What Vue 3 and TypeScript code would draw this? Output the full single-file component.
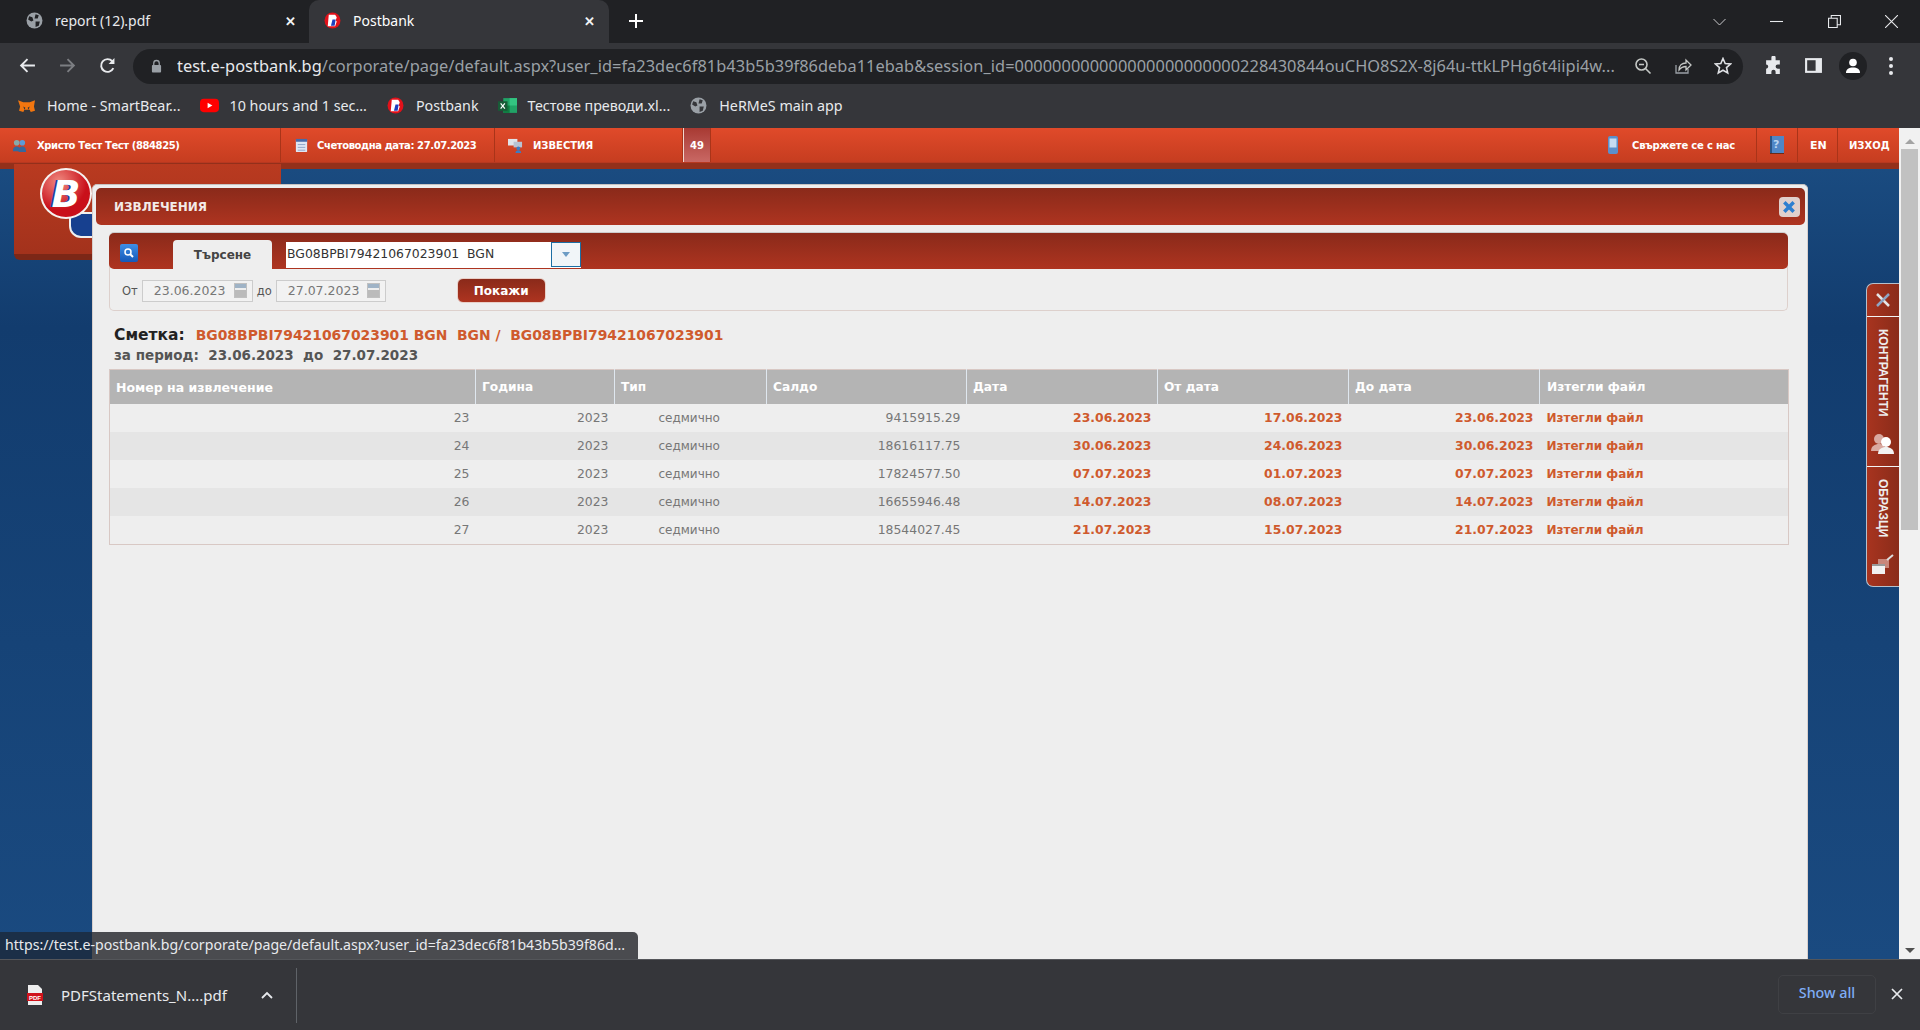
<script setup lang="ts">
const bookmarks = [
  { label: 'Home - SmartBear...', icon: 'fox' },
  { label: '10 hours and 1 sec...', icon: 'yt' },
  { label: 'Postbank', icon: 'pb' },
  { label: 'Тестове преводи.xl...', icon: 'xl' },
  { label: 'HeRMeS main app', icon: 'globe' },
]

const rows = [
  { no: 23, saldo: '9415915.29', date: '23.06.2023', from: '17.06.2023', to: '23.06.2023' },
  { no: 24, saldo: '18616117.75', date: '30.06.2023', from: '24.06.2023', to: '30.06.2023' },
  { no: 25, saldo: '17824577.50', date: '07.07.2023', from: '01.07.2023', to: '07.07.2023' },
  { no: 26, saldo: '16655946.48', date: '14.07.2023', from: '08.07.2023', to: '14.07.2023' },
  { no: 27, saldo: '18544027.45', date: '21.07.2023', from: '15.07.2023', to: '21.07.2023' },
]

const columns = ['Номер на извлечение', 'Година', 'Тип', 'Салдо', 'Дата', 'От дата', 'До дата', 'Изтегли файл']
</script>

<template>
  <div class="window">
    <div class="tabstrip">
      <div class="tab">
        <svg class="fav" viewBox="0 0 16 16"><circle cx="8" cy="8" r="7.5" fill="#9aa0a6" /><path d="M3 4l3 1 1 3-2 1-3-2zM9 2l3 1-1 3-3 0zM9 9l4 0-1 4-3 1z" fill="#202124" /></svg>
        <span class="tab-title">report (12).pdf</span>
        <span class="tab-x">✕</span>
      </div>
      <div class="tab active">
        <svg class="fav" viewBox="0 0 16 16"><circle cx="8" cy="8" r="7.5" fill="#e2111a" /><path d="M4.500 2.500h6l1.500 2.500-1 3 1 1-1.500 4.500H3.500z" fill="#fff" /><path d="M8 7h3l-1 6H6.500z" fill="#1d3fbf" /></svg>
        <span class="tab-title">Postbank</span>
        <span class="tab-x">✕</span>
      </div>
      <svg class="newtab" viewBox="0 0 16 16"><path d="M8 1v14M1 8h14" stroke="#fff" stroke-width="2" /></svg>
      <div class="win-controls">
        <svg viewBox="0 0 12 8" class="wc-chev"><path d="M0 1l6 6 6-6" fill="none" stroke="#c8c9cb" /></svg>
        <svg viewBox="0 0 12 12" class="wc"><path d="M0 6h12" stroke="#e8eaed" /></svg>
        <svg viewBox="0 0 12 12" class="wc"><path d="M.5 3h8v8.500h-8zM3 3V.5h8.500V9H9" fill="none" stroke="#e8eaed" /></svg>
        <svg viewBox="0 0 12 12" class="wc"><path d="M0 0l12 12M12 0L0 12" stroke="#e8eaed" /></svg>
      </div>
    </div>

    <div class="toolbar">
      <svg class="nav" viewBox="0 0 16 16"><path d="M15 8H2M8 2L2 8l6 6" fill="none" stroke="#e8eaed" stroke-width="1.800" /></svg>
      <svg class="nav" viewBox="0 0 16 16"><path d="M1 8h13M8 2l6 6-6 6" fill="none" stroke="#7c7e82" stroke-width="1.800" /></svg>
      <svg class="nav" viewBox="0 0 16 16"><path d="M13.500 10.500A6 6 0 1 1 12.500 4" fill="none" stroke="#e8eaed" stroke-width="1.800" /><path d="M14.500 1v5.500H9z" fill="#e8eaed" /></svg>
      <div class="omnibox">
        <svg class="lock" viewBox="0 0 12 14"><path d="M3 6V4a3 3 0 0 1 6 0v2" fill="none" stroke="#9aa0a6" stroke-width="1.400" /><rect x="1" y="6" width="10" height="8" rx="1" fill="#9aa0a6" /></svg>
        <span class="url"><b>test.e-postbank.bg</b>/corporate/page/default.aspx?user_id=fa23dec6f81b43b5b39f86deba11ebab&amp;session_id=000000000000000000000000228430844ouCHO8S2X-8j64u-ttkLPHg6t4iipi4w...</span>
        <svg class="omni-ic zoom-ic" viewBox="0 0 18 18"><circle cx="7.500" cy="7.500" r="5.500" fill="none" stroke="#c4c7c5" stroke-width="1.600" /><path d="M5 7.500h5M11.500 11.500l5 5" stroke="#c4c7c5" stroke-width="1.600" /></svg>
        <svg class="omni-ic" viewBox="0 0 18 18"><path d="M2 8v8h12v-4" fill="none" stroke="#9aa0a6" stroke-width="1.300" /><path d="M5 13c0-5 3-7 7-7V3l5 5-5 5V9.500c-3 0-5 1-7 3.500z" fill="none" stroke="#c4c7c5" stroke-width="1.300" /></svg>
        <svg class="omni-ic" viewBox="0 0 18 18"><path d="M9 1.500l2.200 5 5.300.5-4 3.600 1.200 5.300L9 13.200l-4.700 2.700 1.200-5.300-4-3.600 5.300-.5z" fill="none" stroke="#dfe1e5" stroke-width="1.600" /></svg>
      </div>
      <svg class="tool-ic" viewBox="0 0 18 18"><path d="M7 1.500a2 2 0 0 1 4 0V4h4v4h-2a2 2 0 0 0 0 4h2v5H11v-2a2 2 0 0 0-4 0v2H2v-5a2 2 0 0 0 0-4V4h5z" fill="#e8eaed" /></svg>
      <svg class="tool-ic" viewBox="0 0 18 18"><rect x="1" y="2" width="16" height="14" fill="#e8eaed" /><rect x="3" y="4" width="8" height="10" fill="#35363a" /></svg>
      <div class="avatar"><svg viewBox="0 0 18 18"><circle cx="9" cy="5.500" r="3.800" fill="#fff" /><path d="M2 16c0-4 3-5.500 7-5.500s7 1.500 7 5.500z" fill="#fff" /></svg></div>
      <div class="dots"><i></i><i></i><i></i></div>
    </div>

    <div class="bookmarks">
      <div v-for="b in bookmarks" :key="b.label" class="bookmark">
        <svg v-if="b.icon === 'fox'" viewBox="0 0 16 16"><path d="M0 3l5 2h6l5-2-1 6 1 4-4 1-1-2H6l-1 2-4-1 1-4z" fill="#f2760f" /><path d="M5 9l2 1-1 2zM11 9l-2 1 1 2z" fill="#35363a" /></svg>
        <svg v-else-if="b.icon === 'yt'" viewBox="0 0 20 16"><rect y="1" width="20" height="14" rx="4" fill="#f00" /><path d="M8 5l5 3-5 3z" fill="#fff" /></svg>
        <svg v-else-if="b.icon === 'pb'" viewBox="0 0 16 16"><circle cx="8" cy="8" r="7.500" fill="#e2111a" /><path d="M4.500 2.500h6l1.500 2.500-1 3 1 1-1.500 4.500H3.500z" fill="#fff" /><path d="M8 7h3l-1 6H6.500z" fill="#1d3fbf" /></svg>
        <svg v-else-if="b.icon === 'xl'" viewBox="0 0 18 16"><rect x="5" y="1" width="13" height="14" fill="#21a366" /><rect x="11" y="1" width="7" height="7" fill="#33c481" /><rect x="5" y="8" width="6" height="7" fill="#107c41" /><rect y="4" width="9" height="9" fill="#185c37" /><path d="M2.500 6l4 5M6.500 6l-4 5" stroke="#fff" stroke-width="1.100" /></svg>
        <svg v-else viewBox="0 0 16 16"><circle cx="8" cy="8" r="7.500" fill="#9aa0a6" /><path d="M3 4l3 1 1 3-2 1-3-2zM9 2l3 1-1 3-3 0zM9 9l4 0-1 4-3 1z" fill="#35363a" /></svg>
        <span>{{ b.label }}</span>
      </div>
    </div>

    <div class="page">
      <div class="site">
        <header class="topbar">
          <div class="top-cell user">
            <svg class="top-ic" viewBox="0 0 16 16"><circle cx="5" cy="5" r="3" fill="#8aa" /><circle cx="11" cy="5" r="3" fill="#5b9bd8" /><path d="M1 14c0-4 2-5 4-5s4 1 4 5zM7 15c0-5 2-6 4-6s4 1 4 6z" fill="#35689c" /></svg>
            Христо Тест Тест (884825)
          </div>
          <div class="top-cell date">
            <svg class="top-ic" viewBox="0 0 14 16"><rect x="1" y="1" width="12" height="14" rx="1" fill="#dfe6f3" /><rect x="1" y="1" width="12" height="3" fill="#4a6aa8" /><path d="M3 7h8M3 10h8M3 13h8" stroke="#8fa4c8" /></svg>
            Счетоводна дата: 27.07.2023
          </div>
          <div class="top-cell news">
            <svg class="top-ic" viewBox="0 0 16 16"><rect x="0" y="1" width="10" height="7" fill="#dfe3ea" /><rect x="6" y="4" width="9" height="6" fill="#b7c3d4" /><circle cx="11" cy="11" r="2" fill="#3b7cc4" /><path d="M8 16c0-2 1-3 3-3s3 1 3 3z" fill="#3b7cc4" /></svg>
            ИЗВЕСТИЯ
          </div>
          <div class="top-count">49</div>
          <div class="top-fill"></div>
          <div class="top-cell contact">
            <svg class="top-ic phone" viewBox="0 0 12 18"><rect x="1" y="0" width="10" height="18" rx="2" fill="#5b8fcb" /><rect x="2.500" y="2.500" width="7" height="9" fill="#c6dbf2" /></svg>
            Свържете се с нас
          </div>
          <div class="top-cell help">
            <svg class="book" viewBox="0 0 14 18"><rect x="0" y="0" width="14" height="17" fill="#4f86c6" /><rect x="0" y="0" width="2" height="17" fill="#2a5588" /><rect y="17" width="14" height="1" fill="#6b2a16" /></svg>
            <span class="q">?</span>
          </div>
          <div class="top-cell lang">EN</div>
          <div class="top-cell exit">ИЗХОД</div>
        </header>
        <div class="top-shade"></div>
        <div class="blue"></div>
      </div>

      <div class="logo-tab"></div>
      <div class="logo">
        <div class="logo-blue"></div>
        <div class="logo-round"><span class="logo-b">B</span></div>
      </div>

      <section class="modal">
        <div class="modal-head">
          <span>ИЗВЛЕЧЕНИЯ</span>
          <button class="modal-close"><svg viewBox="0 0 12 12"><path d="M2 2l8 8M10 2l-8 8" stroke="#2d7fd0" stroke-width="3" /></svg></button>
        </div>

        <div class="filters">
          <div class="filters-bar">
            <div class="search-ic"><svg viewBox="0 0 12 12"><circle cx="5" cy="5" r="3" fill="none" stroke="#fff" stroke-width="1.500" /><path d="M7 7l3 3" stroke="#fff" stroke-width="2" /></svg></div>
            <div class="search-tab">Търсене</div>
            <div class="account-select">
              <span>BG08BPBI79421067023901&nbsp; BGN</span>
              <i class="select-btn"><b></b></i>
            </div>
          </div>
          <div class="filters-row">
            <span class="lbl">От</span>
            <div class="date-input"><span>23.06.2023</span><i class="cal"></i></div>
            <span class="lbl">до</span>
            <div class="date-input"><span>27.07.2023</span><i class="cal"></i></div>
            <button class="show-btn">Покажи</button>
          </div>
        </div>

        <div class="account-line">
          <strong>Сметка:</strong>
          <span>BG08BPBI79421067023901 BGN&nbsp; BGN /&nbsp; BG08BPBI79421067023901</span>
        </div>
        <div class="period-line">за период:&nbsp; <b>23.06.2023&nbsp; до&nbsp; 27.07.2023</b></div>

        <table class="statements">
          <colgroup>
            <col class="c1" /><col class="c2" /><col class="c3" /><col class="c4" />
            <col class="c5" /><col class="c5" /><col class="c5" /><col />
          </colgroup>
          <thead>
            <tr><th v-for="c in columns" :key="c">{{ c }}</th></tr>
          </thead>
          <tbody>
            <tr v-for="r in rows" :key="r.no">
              <td class="num">{{ r.no }}</td>
              <td class="num">2023</td>
              <td class="type">седмично</td>
              <td class="num">{{ r.saldo }}</td>
              <td class="num link">{{ r.date }}</td>
              <td class="num link">{{ r.from }}</td>
              <td class="num link">{{ r.to }}</td>
              <td class="link file-link">Изтегли файл</td>
            </tr>
          </tbody>
        </table>
      </section>

      <aside class="side-tabs">
        <div class="side-tool">
          <svg viewBox="0 0 16 16"><path d="M2 2l12 12" stroke="#e6e6e6" stroke-width="2.500" /><path d="M14 2L2 14" stroke="#8fa6c4" stroke-width="2.500" /></svg>
        </div>
        <div class="side-item first">
          <span class="side-label">КОНТРАГЕНТИ</span>
          <svg viewBox="0 0 24 22"><circle cx="8" cy="6" r="5" fill="#d9a9a0" /><path d="M0 18c0-5 4-7 8-7s6 2 6 7z" fill="#d9a9a0" /><circle cx="15" cy="9" r="5" fill="#fff" /><path d="M7 21c0-5 4-7 8-7s8 2 8 7z" fill="#f2f2f2" /></svg>
        </div>
        <div class="side-item">
          <span class="side-label">ОБРАЗЦИ</span>
          <svg viewBox="0 0 24 22"><rect x="7" y="6" width="11" height="9" fill="#c9867a" /><path d="M16 7l6-5" stroke="#ddd" stroke-width="2" /><rect x="1" y="11" width="13" height="10" fill="#f1f1f1" /><rect x="1" y="11" width="13" height="2" fill="#999" /></svg>
        </div>
      </aside>

      <div class="scrollbar">
        <i class="arrow up"></i>
        <div class="thumb"></div>
        <i class="arrow down"></i>
      </div>

      <div class="status-bubble">https://test.e-postbank.bg/corporate/page/default.aspx?user_id=fa23dec6f81b43b5b39f86d...</div>
    </div>

    <footer class="shelf">
      <svg class="pdf" viewBox="0 0 16 20"><path d="M1 0h10l4 4v16H1z" fill="#eee" /><rect y="8" width="16" height="8" fill="#d0121b" /><text x="8" y="14.500" text-anchor="middle" class="pdf-text">PDF</text></svg>
      <span class="file">PDFStatements_N....pdf</span>
      <svg class="chev" viewBox="0 0 12 8"><path d="M1 7l5-5 5 5" fill="none" stroke="#e8eaed" stroke-width="1.800" /></svg>
      <div class="shelf-sep"></div>
      <button class="show-all">Show all</button>
      <svg class="shelf-x" viewBox="0 0 12 12"><path d="M1 1l10 10M11 1L1 11" stroke="#e8eaed" stroke-width="1.700" /></svg>
    </footer>
  </div>
</template>

<style>
html, body { margin: 0; overflow: hidden; }
</style>

<style scoped>
.window {
  width: 1920px;
  height: 1030px;
  display: flex;
  flex-direction: column;
  overflow: hidden;
  font-family: "Noto Sans", sans-serif;
}

.tabstrip {
  height: 43px;
  background: #202124;
  display: flex;
  align-items: flex-end;
  flex: none;
}
.tab {
  width: 300px;
  height: 43px;
  display: flex;
  align-items: center;
  padding: 0 4px 2px 26px;
  box-sizing: border-box;
  color: #e8eaed;
  font-size: 14px;
  flex: none;
}
.tab.active {
  width: 300px;
  margin-left: 9px;
  padding-left: 15px;
  padding-right: 14px;
  background: #35363a;
  border-radius: 10px 10px 0 0;
  color: #fff;
}
.fav { width: 17px; height: 17px; flex: none; margin-right: 12px; }
.tab-title { flex: 1; }
.tab-x { font-size: 13px; color: #f1f3f4; font-weight: 700; }
.newtab { width: 16px; height: 16px; margin: 0 0 1px 19px; align-self: center; }
.win-controls {
  margin-left: auto;
  display: flex;
  align-items: center;
  align-self: stretch;
  padding-right: 22px;
  gap: 44.500px;
}
.wc { width: 13px; height: 13px; }
.wc-chev { width: 13px; height: 8px; }

.toolbar {
  height: 45px;
  background: #35363a;
  display: flex;
  align-items: center;
  flex: none;
  padding-left: 19px;
  box-sizing: border-box;
}
.nav { width: 17px; height: 17px; margin-right: 23px; flex: none; }
.omnibox {
  width: 1610px;
  height: 35px;
  margin-left: -6px;
  background: #202124;
  border-radius: 18px;
  display: flex;
  align-items: center;
  padding: 0 11px 0 18px;
  box-sizing: border-box;
  flex: none;
  margin-top: 1px;
}
.lock { width: 11px; height: 14px; margin-right: 15px; flex: none; }
.url {
  flex: 1;
  white-space: nowrap;
  overflow: hidden;
  color: #9aa0a6;
  font-size: 16.350px;
  letter-spacing: .05px;
}
.url b { color: #e8eaed; font-weight: 400; }
.omni-ic { width: 18px; height: 18px; margin-left: 22px; flex: none; }
.omni-ic.zoom-ic { margin-left: 12px; }
.tool-ic { width: 19px; height: 19px; margin-left: 21px; flex: none; }
.avatar {
  width: 28px;
  height: 28px;
  border-radius: 50%;
  background: #202124;
  margin-left: 16px;
  display: flex;
  align-items: center;
  justify-content: center;
}
.avatar svg { width: 18px; height: 18px; }
.dots { display: flex; flex-direction: column; gap: 3px; margin-left: 22px; }
.dots i { width: 4px; height: 4px; border-radius: 50%; background: #e8eaed; }

.bookmarks {
  height: 40px;
  background: #35363a;
  display: flex;
  align-items: center;
  padding-left: 17px;
  gap: 19px;
  flex: none;
  box-sizing: border-box;
  padding-bottom: 6px;
}
.bookmark {
  display: flex;
  align-items: center;
  gap: 11px;
  color: #e8eaed;
  font-size: 14.300px;
}
.bookmark svg { width: 19px; height: 17px; }

.page {
  flex: 1;
  position: relative;
  overflow: hidden;
  min-height: 0;
  background: #f1f1f1;
}
.site {
  width: 1899px;
  height: 100%;
  display: flex;
  flex-direction: column;
  font-family: "DejaVu Sans", sans-serif;
}
.topbar {
  height: 35px;
  display: flex;
  flex: none;
  background: linear-gradient(#e04a2a, #c63d20);
  border-bottom: 1px solid #b83820;
  box-sizing: border-box;
  color: #fff;
  font-size: 10px;
  font-weight: 700;
  letter-spacing: -.4px;
}
.top-cell {
  display: flex;
  align-items: center;
  border-right: 1px solid #a93419;
  box-sizing: border-box;
  flex: none;
  padding-left: 12px;
  white-space: nowrap;
}
.top-ic { width: 15px; height: 15px; margin-right: 10px; flex: none; }
.user { width: 281px; }
.date { width: 214px; padding-left: 13px; }
.date .top-ic { margin-right: 8px; }
.news { width: 188px; padding-left: 13px; letter-spacing: 0; }
.top-count {
  width: 28px;
  background: linear-gradient(#a83a33, #c96864);
  border-left: 1px solid #f3d7d0;
  border-right: 1px solid #a93419;
  box-sizing: border-box;
  display: flex;
  align-items: center;
  justify-content: center;
  letter-spacing: 0;
}
.top-fill { flex: 1; }
.contact { border-right: 1px solid #a93419; width: 150px; padding-left: 0; letter-spacing: -.2px; }
.phone { height: 18px; margin-right: 13px; width: 12px; }
.help { width: 41px; padding-left: 13px; position: relative; }
.book { width: 14px; height: 18px; }
.q { position: absolute; left: 16px; top: 10px; color: #b8d4f0; font-size: 11px; }
.lang { width: 40px; padding-left: 12px; font-size: 11px; letter-spacing: 0; }
.exit { width: 61px; border-right: 0; padding-left: 11px; font-size: 10px; letter-spacing: 0; }
.top-shade { height: 6px; background: #93301b; flex: none; }
.blue {
  flex: 1;
  background: linear-gradient(#1a4b80, #123c6e 20%, #1a4a80);
}

.logo-tab {
  position: absolute;
  left: 14px;
  top: 36px;
  width: 267px;
  height: 96px;
  background: linear-gradient(#b93a20, #a3321c 94%, #7c2717 94%);
  border-radius: 0 0 6px 6px;
}
.logo { position: absolute; left: 40px; top: 40px; width: 56px; height: 72px; }
.logo-round {
  position: absolute;
  inset: 0 0 17px 0;
  width: 52px;
  height: 51px;
  border-radius: 50%;
  background: radial-gradient(circle at 35% 25%, #f08a80, #c9101a 60%);
  border: 2px solid #f6f2f0;
  box-sizing: border-box;
  display: flex;
  align-items: center;
  justify-content: center;
}
.logo-b {
  font: italic 700 38px "DejaVu Sans", sans-serif;
  color: #fff;
  text-shadow: -2px 0 0 #1d3f93;
}
.logo-blue {
  position: absolute;
  left: 29px;
  top: 44px;
  width: 26px;
  height: 22px;
  background: #17408f;
  border: 2px solid #f0f0f0;
  border-radius: 0 0 0 12px;
}

.modal {
  position: absolute;
  left: 92px;
  top: 56px;
  width: 1716px;
  height: 900px;
  background: #eeeeee;
  border-radius: 5px 5px 0 0;
  border-top: 1px solid #c7c2c0;
  border-right: 1px solid #d8cfcc;
  border-left: 1px solid #d8cfcc;
  padding: 3px 2px 0 3px;
  box-sizing: border-box;
  font-family: "DejaVu Sans", sans-serif;
}
.modal-head {
  height: 37px;
  background: linear-gradient(#8a2a1a, #ae3420);
  border-radius: 5px;
  display: flex;
  align-items: center;
  justify-content: space-between;
  padding: 0 5px 0 18px;
  color: #f3ebe8;
  font-size: 12px;
  font-weight: 700;
}
.modal-close {
  width: 21px;
  height: 20px;
  padding: 3px;
  border: 0;
  border-radius: 4px;
  background: #e0d0cc;
  display: flex;
}
.filters {
  margin: 7px 17px 0 13px;
  height: 79px;
  border: 1px solid #ddd0cc;
  border-top-color: #cccccc;
  border-radius: 5px;
  box-sizing: border-box;
}
.filters-bar {
  height: 36px;
  margin: 0 -1px;
  background: linear-gradient(#8a2a1a, #ae3420);
  border-radius: 5px;
  display: flex;
  position: relative;
}
.search-ic {
  width: 18px;
  height: 18px;
  margin: 11px 0 0 11px;
  background: linear-gradient(#3f8fe6, #1558b8);
  border-radius: 2px;
  display: flex;
  padding: 3px;
  box-sizing: border-box;
}
.search-tab {
  width: 99px;
  height: 29px;
  margin: 7px 0 0 35px;
  background: #eeeeee;
  border-radius: 4px 4px 0 0;
  text-align: center;
  line-height: 30px;
  font-size: 12px;
  font-weight: 700;
  color: #444;
}
.account-select {
  display: flex;
  margin: 9px 0 0 14px;
  width: 295px;
  height: 26px;
  align-self: flex-start;
  background: #fff;
  font-size: 12.400px;
  line-height: 24px;
  color: #333;
  padding-left: 1px;
  box-sizing: border-box;
}
.account-select span { flex: 1; white-space: nowrap; font-family: "DejaVu Sans", sans-serif; }
.select-btn {
  width: 30px;
  height: 25px;
  background: #f1f5f8;
  border: 1px solid #1c6ea4;
  box-sizing: border-box;
  display: flex;
  align-items: center;
  justify-content: center;
}
.select-btn b {
  border-left: 4px solid transparent;
  border-right: 4px solid transparent;
  border-top: 5px solid #6d9cc4;
}
.filters-row {
  display: flex;
  align-items: center;
  height: 41px;
  padding: 2px 0 0 12px;
  box-sizing: border-box;
  font-size: 11.500px;
  color: #555;
}
.lbl { margin-right: 4px; }
.date-input + .lbl { margin-left: 4px; }
.date-input {
  width: 111px;
  height: 22px;
  border: 1px solid #ccc;
  background: #f2f2f2;
  display: flex;
  align-items: center;
  justify-content: space-between;
  padding: 0 5px 0 11px;
  box-sizing: border-box;
  color: #777;
  font-size: 12.500px;
}
.cal {
  width: 13px;
  height: 15px;
  background: linear-gradient(#9fb3c6 0 30%, #eee 30% 45%, #bbb 45%);
  border: 1px solid #c0c0c0;
  box-sizing: border-box;
}
.date-input + .lbl + .date-input { width: 110px; }
.show-btn {
  margin-left: 71px;
  width: 89px;
  height: 25px;
  border: 1px solid #e8cfc8;
  border-radius: 6px;
  background: linear-gradient(#8a2a1a, #ae3420);
  color: #fff;
  font: 700 12px "DejaVu Sans", sans-serif;
}
.account-line {
  margin: 14px 0 0 18px;
  font-size: 14px;
  line-height: 20px;
  font-weight: 700;
  color: #333;
  white-space: nowrap;
}
.account-line strong { color: #222; margin-right: 11px; font-size: 15.500px; }
.account-line span { color: #cf5a2d; font-size: 13.900px; }
.period-line {
  margin-left: 18px;
  font-size: 13.500px;
  line-height: 20px;
  color: #555;
  font-weight: 700;
}
.statements {
  margin: 4px 0 0 13px;
  width: 1680px;
  border-collapse: collapse;
  table-layout: fixed;
  border: 1px solid #d8c8c4;
  font-size: 12px;
}
.c1 { width: 366px; }
.c2 { width: 139px; }
.c3 { width: 152px; }
.c4 { width: 200px; }
.c5 { width: 191px; }
.statements th {
  height: 34px;
  padding: 1px 0 0 6px;
  box-sizing: border-box;
  background: #b4b4b4;
  border-left: 1px solid #dfe7ef;
  color: #fff;
  text-align: left;
  font-weight: 700;
  font-size: 12.200px;
}
.statements th:first-child { border-left: 0; font-size: 12.500px; }
.statements th:last-child { padding-left: 7px; }
.statements td {
  height: 28.200px;
  padding: 0 6px;
  color: #777;
  white-space: nowrap;
  line-height: 28px;
  vertical-align: baseline;
}
.statements tbody tr:nth-child(even) td { background: #e5e5e5; }
.statements .num { text-align: right; font-size: 12.400px; }
.statements .type { padding-left: 44px; }
.statements .link { color: #cf5a2d; font-weight: 700; }
.statements .file-link { padding-left: 7px; }

.side-tabs {
  position: absolute;
  left: 1866px;
  top: 155px;
  width: 33px;
  height: 304px;
  background: linear-gradient(90deg, #a8341f, #8a2c1a);
  border-radius: 7px 0 0 7px;
  border: 1px solid #b5c0cc;
  border-right: 0;
  box-sizing: border-box;
  color: #eee;
  font: 700 11px "Liberation Sans", sans-serif;
}
.side-tool {
  height: 33px;
  display: flex;
  align-items: center;
  justify-content: center;
  border-bottom: 1px solid #f4f4f4;
  box-sizing: border-box;
}
.side-tool svg { width: 16px; height: 16px; }
.side-item {
  height: 150px;
  display: flex;
  flex-direction: column;
  align-items: center;
  padding-top: 12px;
  box-sizing: border-box;
}
.side-item.first { border-bottom: 1px solid #f4f4f4; }
.side-item svg { width: 24px; height: 22px; }
.side-label {
  writing-mode: vertical-rl;
  font-size: 12px;
  margin-bottom: 10px;
  height: 94px;
}
.side-item:last-child .side-label { height: 64px; }

.scrollbar {
  position: absolute;
  right: 0;
  top: 0;
  bottom: 0;
  width: 21px;
  background: #f1f1f1;
  display: flex;
  flex-direction: column;
  align-items: center;
}
.thumb {
  width: 17px;
  height: 381px;
  background: #c1c1c1;
  margin-top: 5px;
}
.arrow {
  border-left: 5px solid transparent;
  border-right: 5px solid transparent;
}
.arrow.up { border-bottom: 5px solid #a3a3a3; margin-top: 11px; height: 0; }
.arrow.down { border-top: 5px solid #505050; position: absolute; bottom: 6px; }

.status-bubble {
  position: absolute;
  left: 0;
  bottom: 0;
  height: 27px;
  width: 638px;
  background: linear-gradient(90deg, #1b2f47 0 92px, #4a4b4f 92px);
  border-radius: 0 5px 0 0;
  color: #e8eaed;
  font-size: 14.150px;
  line-height: 26px;
  padding-left: 5px;
  box-sizing: border-box;
  white-space: nowrap;
  overflow: hidden;
}

.shelf {
  height: 71px;
  background: #35363a;
  border-top: 1px solid #54565a;
  box-sizing: border-box;
  display: flex;
  align-items: center;
  flex: none;
  padding-left: 27px;
  color: #e8eaed;
}
.pdf { width: 16px; height: 20px; margin-right: 18px; }
.pdf-text { font: 700 6px "Liberation Sans", sans-serif; fill: #fff; }
.file { font-size: 15px; width: 200px; }
.chev { width: 12px; height: 8px; }
.shelf-sep { width: 1px; height: 55px; background: #5f6368; margin-left: 23px; }
.show-all {
  margin: 0 0 2px auto;
  width: 98px;
  height: 39px;
  padding: 0 0 3px;
  background: transparent;
  border: 1px solid #3f4044;
  border-radius: 5px;
  color: #7fadf6;
  font: 500 14.300px "Noto Sans", sans-serif;
}
.shelf-x { width: 12px; height: 12px; margin: 0 17px 2px 15px; }
</style>
